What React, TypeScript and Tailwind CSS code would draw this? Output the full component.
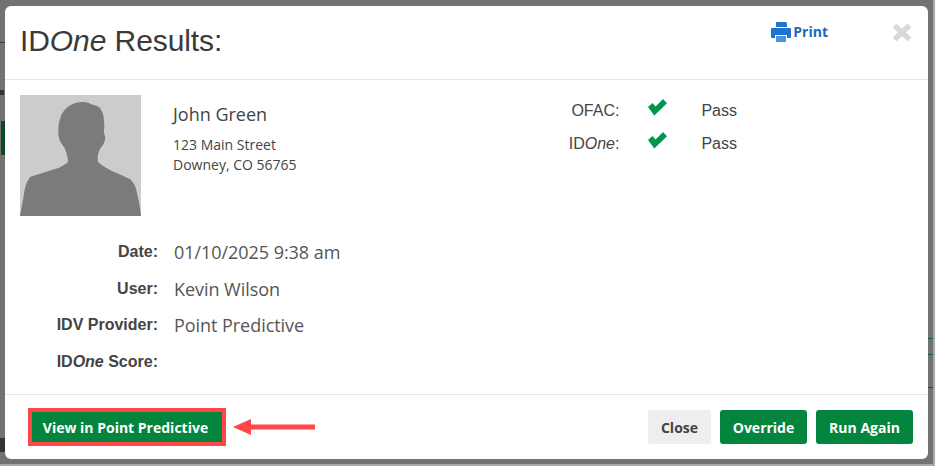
import React from "react";

const openSans = "font-['Open_Sans',sans-serif]";
const arial = "font-['Liberation_Sans',Arial,sans-serif]";

const details = [
  { label: <>Date:</>, value: "01/10/2025 9:38 am" },
  { label: <>User:</>, value: "Kevin Wilson" },
  { label: <>IDV Provider:</>, value: "Point Predictive" },
  { label: <>ID<em>One</em> Score:</>, value: "" },
];

const checks = [
  { label: <>OFAC:</>, result: "Pass" },
  { label: <>ID<em>One</em>:</>, result: "Pass" },
];

// bits of the page showing behind the backdrop, right side
const behindMarks = ["top-[338px]", "top-[354px]", "top-[387px]"];

function Silhouette() {
  return (
    <svg width="121" height="121" viewBox="0 0 121 121" className="shrink-0 bg-[#cccccc]">
      <path
        fill="#7b7b7b"
        d="M62 7 C52 7 42 14 40 24 C38 30 38 38 39 43 C40 48 44 51 45 54 C47 59 48 63 48 67 C44 70 40 73 35 74 C27 77 18 79 10 82 C6 88 5 92 4 99 L0 121 L121 121 C120 112 119 106 117 98 C116 92 114 88 110 84 C104 81 98 79 92 76 C86 73 81 70 78 67 C77 62 78 58 80 54 C83 50 86 46 85 41 C83 37 85 32 84 27 C84 20 82 15 79 12 C75 10 72 10 69 8 C67 7 64 7 62 7 Z"
      />
    </svg>
  );
}

function PrintIcon() {
  return (
    <svg width="20" height="20" viewBox="0 0 20 20" className="mt-[1px] shrink-0">
      <path fill="#1f74d2" d="M5 0 H15 L16 1 V5 H5 Z" />
      <path fill="#1f74d2" d="M1 6 H19 Q20 6 20 7 V15 Q20 16 19 16 H16 V13 H4 V16 H1 Q0 16 0 15 V7 Q0 6 1 6 Z" />
      <path fill="#4a94e4" d="M5 14 H15 V20 H5 Z" />
    </svg>
  );
}

function CheckIcon() {
  return (
    <svg width="19" height="17" viewBox="0 0 19 17" className="ml-[29px] mt-[-6px] shrink-0">
      <path fill="#00964b" d="M0 8 L4.5 4 L7.5 7.5 L15 0 L19 4.3 L6.3 16.5 Z" />
    </svg>
  );
}

function CloseIcon() {
  return (
    <svg width="20" height="19" viewBox="0 0 20 19" className="ml-[64px] mr-[16px] mt-[17px] shrink-0">
      <path stroke="#d9d9d9" strokeWidth="5.5" d="M2.5 2.5 L17.5 16.5 M17.5 2.5 L2.5 16.5" />
    </svg>
  );
}

export default function App() {
  return (
    <div className="relative h-[471px] w-[939px] overflow-hidden bg-white">
      <div className="h-[466px] w-[935px] bg-[#a8a8a8] pb-[2px] pr-[2px]">
        <div className="relative h-full w-full bg-[#727272] pl-[5px] pt-[6px]">
          <div className="absolute left-[1px] top-[121px] h-[34px] w-[4px] bg-[#0b4a26]" />
          <div className="absolute left-0 top-[42px] h-[1px] w-[5px] bg-[#1c4a30]" />
          <div className="absolute left-0 top-[90px] h-[5px] w-[4px] bg-[#333333]" />
          <div className="absolute left-0 top-[438px] h-[14px] w-[5px] bg-[#333333]" />
          {behindMarks.map((top) => (
            <div key={top} className={`absolute right-0 h-[1px] w-[5px] bg-[#1c5a38] ${top}`} />
          ))}

          <div className="flex h-[453px] w-[923px] flex-col rounded-[6px] bg-white">
            <div className="flex h-[74px] shrink-0 border-b border-[#e5e5e5] pl-[15px]">
              <h1 className={`${arial} mt-[14px] text-[30px] leading-[42px] tracking-[-0.08px] text-[#3a3a3a]`}>
                ID<em>One</em> Results:
              </h1>
              <div className="ml-auto mt-[14px] flex h-[22px] items-center">
                <PrintIcon />
                <span className={`${openSans} ml-[2px] text-[14px] font-bold text-[#1d69b8]`}>Print</span>
              </div>
              <CloseIcon />
            </div>

            <div className="flex-1 pl-[15px] pt-[15px]">
              <div className="flex">
                <Silhouette />
                <div className={`${openSans} ml-[32px] text-[#444444]`}>
                  <div className="mt-[6px] text-[18px] leading-[26px]">John Green</div>
                  <div className="mt-[8px] text-[14px] leading-[20px]">123 Main Street</div>
                  <div className="text-[14px] leading-[20px]">Downey, CO 56765</div>
                </div>
                <div className={`${arial} ml-auto mr-[191px] mt-[-1px] text-[16px] text-[#444444]`}>
                  {checks.map((row, i) => (
                    <div key={i} className="flex h-[33px] items-center">
                      <span className="w-[80px] text-right">{row.label}</span>
                      <CheckIcon />
                      <span className="ml-[34px]">{row.result}</span>
                    </div>
                  ))}
                </div>
              </div>

              <div className="mt-[18px]">
                {details.map((row, i) => (
                  <div key={i} className="flex h-[36.6px] items-center">
                    <span className={`${arial} w-[138px] text-right text-[16px] font-bold text-[#444444]`}>{row.label}</span>
                    <span className={`${openSans} ml-[16px] mt-[1px] text-[18px] tracking-[-0.05px] text-[#555555]`}>{row.value}</span>
                  </div>
                ))}
              </div>
            </div>

            <div className={`${openSans} flex h-[65px] shrink-0 items-center border-t border-[#e5e5e5] pl-[27px] pr-[15px] text-[14px] font-bold`}>
              <button className="h-[30px] w-[190px] bg-[#03853e] pr-[3px] text-white">View in Point Predictive</button>
              <button className="ml-auto h-[34px] w-[63px] rounded-[3px] bg-[#eeeeee] text-[#444444]">Close</button>
              <button className="ml-[9px] h-[34px] w-[87px] rounded-[3px] bg-[#03853e] text-white">Override</button>
              <button className="ml-[9px] h-[34px] w-[97px] rounded-[3px] bg-[#03853e] text-white">Run Again</button>
            </div>
          </div>
        </div>
      </div>

      {/* annotation: red box and arrow */}
      <div className="absolute left-[28px] top-[408px] h-[38px] w-[198px] border-4 border-[#ff4747]" />
      <svg className="absolute left-[232px] top-[418px]" width="83" height="18" viewBox="0 0 83 18">
        <path fill="#ff4747" d="M1 9 L19 1 L19 6.5 L83 6.5 L83 11.5 L19 11.5 L19 17 Z" />
      </svg>
    </div>
  );
}
